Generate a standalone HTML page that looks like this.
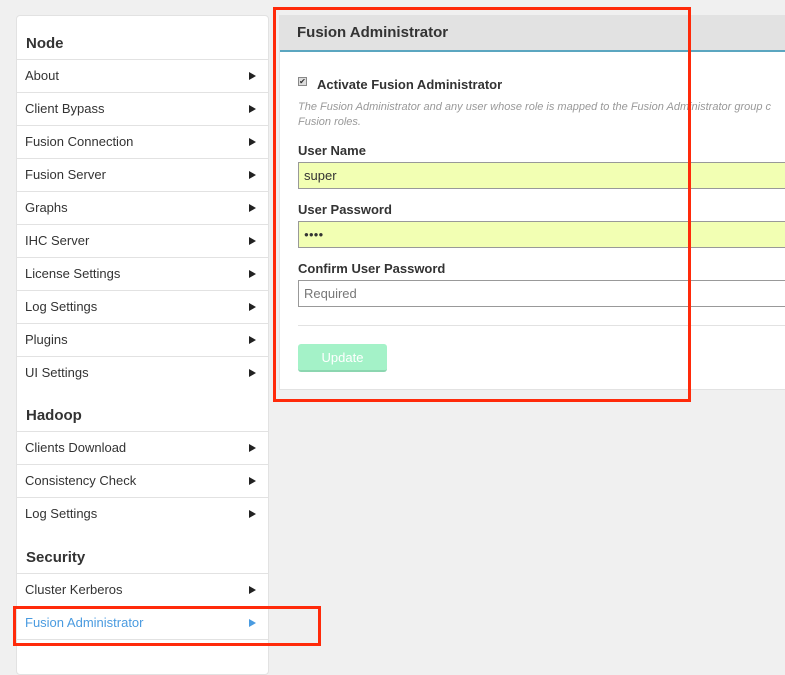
<!DOCTYPE html>
<html><head><meta charset="utf-8"><style>
*{box-sizing:border-box;margin:0;padding:0}
body{width:785px;height:652px;background:#f0f0f0;font-family:"Liberation Sans",Arial,sans-serif;position:relative;overflow:hidden;color:#333}
.side{position:absolute;left:16px;top:15px;width:253px;height:660px;background:#fff;border:1px solid #e2e2e2;border-radius:4px}
.h{position:absolute;left:9px;font-size:15px;font-weight:bold;color:#333}
.row{position:absolute;left:0;width:251px;height:33px;border-top:1px solid #e2e2e2;font-size:13px;line-height:32px;padding-left:8px;color:#333}
.row:after{content:"";position:absolute;right:12px;top:12px;border-left:7px solid #222;border-top:4px solid transparent;border-bottom:4px solid transparent}
.row.act{color:#4a9be0}.row.act:after{border-left-color:#4a9be0}
.row.none:after{display:none}
.main{position:absolute;left:279px;top:15px;width:520px;height:375px;background:#fff;border:1px solid #e2e2e2}
.mh{height:36px;background:#e2e2e2;border-bottom:2px solid #5ba6c0;font-size:15px;font-weight:bold;padding:8px 0 0 17px;color:#333}
.lbl{position:absolute;left:18px;font-size:13px;font-weight:bold;color:#333}
.inp{position:absolute;left:18px;width:500px;height:27px;border:1px solid #999;font-size:13px;padding:5px 5px;background:#f2ffb3}
.red{position:absolute;border:3px solid #ff2a0a}
</style></head><body>
<div class="side">
<div class="h" style="top:19px">Node</div>
<div class="row" style="top:43px">About</div>
<div class="row" style="top:76px">Client Bypass</div>
<div class="row" style="top:109px">Fusion Connection</div>
<div class="row" style="top:142px">Fusion Server</div>
<div class="row" style="top:175px">Graphs</div>
<div class="row" style="top:208px">IHC Server</div>
<div class="row" style="top:241px">License Settings</div>
<div class="row" style="top:274px">Log Settings</div>
<div class="row" style="top:307px">Plugins</div>
<div class="row" style="top:340px">UI Settings</div>
<div class="h" style="top:391px">Hadoop</div>
<div class="row" style="top:415px">Clients Download</div>
<div class="row" style="top:448px">Consistency Check</div>
<div class="row" style="top:481px">Log Settings</div>
<div class="h" style="top:533px">Security</div>
<div class="row" style="top:557px">Cluster Kerberos</div>
<div class="row act" style="top:590px">Fusion Administrator</div>
<div class="row none" style="top:623px;"></div>
</div>
<div class="main">
<div class="mh">Fusion Administrator</div>
<div style="position:absolute;left:18px;top:61px;width:9px;height:9px;border:1px solid #888;background:#ddd;font-size:8px;line-height:7px;text-align:center">✔</div>
<div class="lbl" style="top:61px;left:37px">Activate Fusion Administrator</div>
<div style="position:absolute;left:18px;top:84px;font-size:11px;font-style:italic;color:#999;line-height:15px;white-space:nowrap">The Fusion Administrator and any user whose role is mapped to the Fusion Administrator group c<br>Fusion roles.</div>
<div class="lbl" style="top:127px">User Name</div>
<div class="inp" style="top:146px">super</div>
<div class="lbl" style="top:186px">User Password</div>
<div class="inp" style="top:205px;font-size:8px;padding-top:8px">●●●●</div>
<div class="lbl" style="top:245px">Confirm User Password</div>
<div class="inp" style="top:264px;background:#fff;color:#777">Required</div>
<div style="position:absolute;left:18px;top:309px;width:500px;border-top:1px solid #e2e2e2"></div>
<div style="position:absolute;left:18px;top:328px;width:89px;height:28px;background:#a4f2c8;border-radius:3px;border-bottom:2px solid #8cd6b0;color:#fff;font-size:13px;text-align:center;line-height:27px">Update</div>
</div>
<div class="red" style="left:273px;top:7px;width:418px;height:395px"></div>
<div class="red" style="left:13px;top:606px;width:308px;height:40px"></div>
</body></html>
